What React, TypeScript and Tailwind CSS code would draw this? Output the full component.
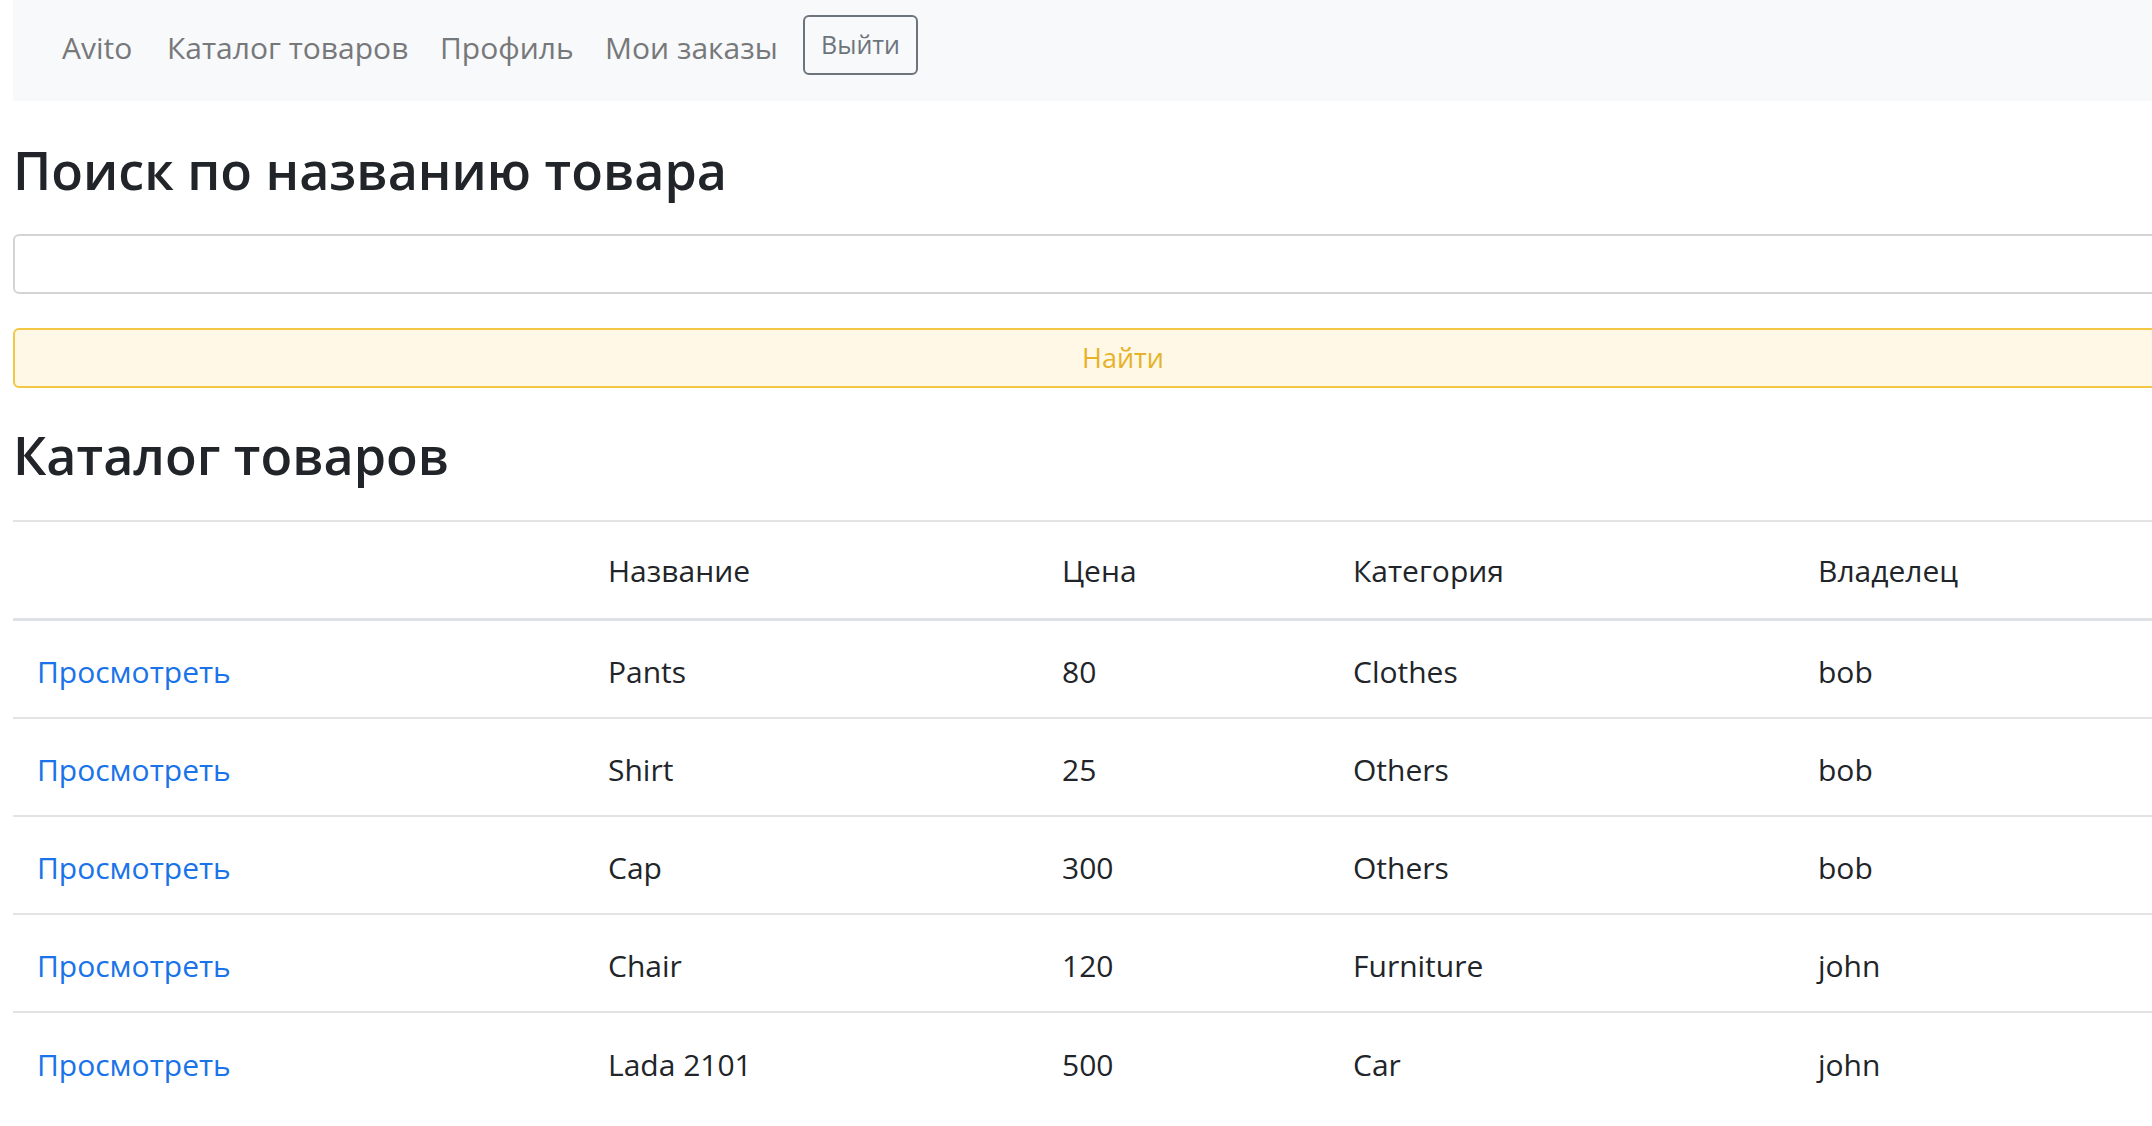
import { useState } from "react";

const products = [
    { name: "Pants", price: 80, category: "Clothes", owner: "bob" },
    { name: "Shirt", price: 25, category: "Others", owner: "bob" },
    { name: "Cap", price: 300, category: "Others", owner: "bob" },
    { name: "Chair", price: 120, category: "Furniture", owner: "john" },
    { name: "Lada 2101", price: 500, category: "Car", owner: "john" },
];

const cols = "grid grid-cols-[571px_454px_291px_465px_1fr]";

export default function App() {
    const [query, setQuery] = useState("");

    function handleQuery(e: any) {
        setQuery(e.target.value);
    }

    return (
        <div className="w-full min-h-screen overflow-hidden bg-white font-['Open_Sans',sans-serif] text-[#212529]">
            <div className="w-[2220px] ml-[13px]">
                {/* navbar */}
                <nav className="h-[101px] bg-[#f8f9fa] flex items-center pb-[6px] pl-[49px] text-[30px] text-[#77787a]">
                    <a className="w-[105px]">Avito</a>
                    <a className="w-[273px]">Каталог товаров</a>
                    <a className="w-[165px]">Профиль</a>
                    <a className="w-[198px]">Мои заказы</a>
                    <button className="w-[115px] h-[60px] mb-[5px] border-2 border-[#6c757d] rounded-[6px] text-[25px] text-[#6c757d] flex items-center justify-center">Выйти</button>
                </nav>

                <h2 className="mt-[35px] h-[67px] text-[52px] leading-[67px] font-semibold">Поиск по названию товара</h2>
                <input value={query} onChange={handleQuery} className="mt-[31px] block w-full h-[60px] border-2 border-[#d4d4d4] rounded-[6px] outline-none px-4 text-[30px]" />
                <button className="mt-[34px] block w-full h-[60px] border-2 border-[#f2c744] rounded-[6px] bg-[#fff8e6] text-[27px] text-[#e6b228]">Найти</button>

                <h2 className="mt-[33px] h-[67px] text-[52px] leading-[67px] font-semibold">Каталог товаров</h2>

                <div className="mt-[32px] border-t-2 border-[#e2e3e5] text-[30px]">
                    <div className={`${cols} h-[99px] items-center pt-[1px] border-b-[3px] border-[#dee2e6]`}>
                        <div></div>
                        <div className="pl-[24px]">Название</div>
                        <div className="pl-[24px]">Цена</div>
                        <div className="pl-[24px]">Категория</div>
                        <div className="pl-[24px]">Владелец</div>
                    </div>
                    {products.map((p, i) => (
                        <div key={p.name} className={`${cols} h-[98px] items-center pt-[4px] ${i < products.length - 1 ? "border-b-2 border-[#e2e3e5]" : ""}`}>
                            <a className="pl-[24px] text-[#1a73e8]">Просмотреть</a>
                            <div className="pl-[24px]">{p.name}</div>
                            <div className="pl-[24px]">{p.price}</div>
                            <div className="pl-[24px]">{p.category}</div>
                            <div className="pl-[24px]">{p.owner}</div>
                        </div>
                    ))}
                </div>
            </div>
        </div>
    );
}
